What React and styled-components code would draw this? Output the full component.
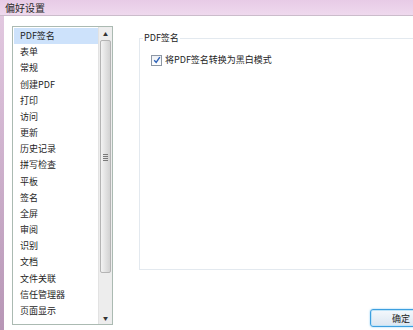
import React from 'react'
import styled, { createGlobalStyle } from 'styled-components'

const Global = createGlobalStyle`
  html, body {
    margin: 0;
    padding: 0;
    width: 413px;
    height: 330px;
    overflow: hidden;
    background: #fff;
  }
  body {
    font-family: "Noto Sans CJK SC", "Noto Sans", sans-serif;
    color: #1e1e1e;
  }
`

const items = [
  'PDF签名', '表单', '常规', '创建PDF', '打印', '访问', '更新', '历史记录', '拼写检查',
  '平板', '签名', '全屏', '审阅', '识别', '文档', '文件关联', '信任管理器', '页面显示'
]

export default function App() {
  return <Frame>
    <Global />
    <TitleBar>偏好设置</TitleBar>
    <Body>
      <Strip />
      <Content>
        <ListBox>
          <Items>
            {items.map((it, i) => <Item key={it} selected={i === 0}>{it}</Item>)}
          </Items>
          <ScrollBar>
            <Arrow>▲</Arrow>
            <Thumb><Grip /></Thumb>
            <Track />
            <Arrow>▼</Arrow>
          </ScrollBar>
        </ListBox>
        <Right>
          <Group>
            <Legend>PDF签名</Legend>
            <CheckRow>
              <Box>
                <svg width="8" height="8" viewBox="0 0 8 8">
                  <path d="M1.2 4.2 L3.2 6.4 L6.8 1.2" fill="none" stroke="#2d62b8" strokeWidth="1.4" />
                </svg>
              </Box>
              将PDF签名转换为黑白模式
            </CheckRow>
          </Group>
          <Footer>
            <OkButton>确定</OkButton>
          </Footer>
        </Right>
      </Content>
    </Body>
  </Frame>
}

const Frame = styled.div`
  width: 413px;
  height: 330px;
  display: flex;
  flex-direction: column;
  overflow: hidden;
`

const TitleBar = styled.div`
  height: 13px;
  padding: 2px 0 0 5px;
  flex: none;
  background: linear-gradient(#e7cbe6, #efd9ee);
  border-bottom: 1px solid #cbbccb;
  font-size: 10px;
  line-height: 11px;
  color: #2a2a2a;
`

const Body = styled.div`
  flex: 1;
  display: flex;
  min-height: 0;
`

const Strip = styled.div`
  width: 4px;
  flex: none;
  background: linear-gradient(#e2c8e0, #b796b6);
`

const Content = styled.div`
  flex: 1;
  display: flex;
  background: #fff;
  padding: 10px 0 0 8px;
  min-width: 0;
`

const ListBox = styled.div`
  width: 99px;
  height: 297px;
  flex: none;
  border: 1px solid #abbab2;
  display: flex;
  background: #fff;
`

const Items = styled.div`
  flex: 1;
  padding-top: 1px;
  padding-left: 1px;
`

const Item = styled.div`
  height: 16.18px;
  line-height: 16px;
  font-size: 9px;
  padding-left: 6px;
  background: ${p => p.selected ? '#cde2fb' : 'transparent'};
`

const ScrollBar = styled.div`
  width: 13px;
  flex: none;
  display: flex;
  flex-direction: column;
  background: #ededed;
  border-left: 1px solid #e2e2e2;
`

const Arrow = styled.div`
  height: 13px;
  flex: none;
  font-size: 5px;
  line-height: 13px;
  text-align: center;
  color: #333;
`

const Thumb = styled.div`
  height: 231px;
  flex: none;
  margin: 0 1px;
  border: 1px solid #b4b4b4;
  border-radius: 2px;
  background: linear-gradient(to right, #f3f3f3, #e4e4e4 45%, #d2d2d2);
  display: flex;
  align-items: center;
  justify-content: center;
`

const Grip = styled.div`
  width: 5px;
  height: 7px;
  background: repeating-linear-gradient(#7a7a7a 0 1px, transparent 1px 2px);
  margin-top: 2px;
`

const Track = styled.div`
  flex: 1;
`

const Right = styled.div`
  flex: 1;
  display: flex;
  flex-direction: column;
  padding-left: 26px;
  min-width: 0;
`

const Group = styled.fieldset`
  margin: 7px -40px 0 0;
  padding: 11px 0 0 11px;
  height: 224px;
  border: 1px solid #e3e9ef;
  border-right: none;
  font-size: 9px;
`

const Legend = styled.legend`
  padding: 0 1px;
  margin-left: -8px;
  font-size: 9px;
  line-height: 10px;
  color: #222;
`

const CheckRow = styled.label`
  display: flex;
  align-items: center;
  gap: 3px;
  font-size: 9px;
  line-height: 12px;
`

const Box = styled.span`
  width: 9px;
  height: 9px;
  border: 1px solid #8d97a4;
  background: linear-gradient(#eef1f5, #fff);
  display: flex;
  align-items: center;
  justify-content: center;
`

const Footer = styled.div`
  flex: 1;
  display: flex;
  justify-content: flex-end;
  align-items: flex-end;
  padding-bottom: 3px;
`

const OkButton = styled.button`
  width: 62px;
  height: 18px;
  margin-right: -19px;
  border: 1px solid #3d9fdf;
  border-radius: 3px;
  box-shadow: 0 0 2px #7cc6f2, inset 0 0 0 1px #bfe4f8;
  background: linear-gradient(#f4f8fc, #dbe6f1);
  font-family: "Noto Sans CJK SC", sans-serif;
  font-size: 9px;
  color: #222;
  padding: 0;
`
